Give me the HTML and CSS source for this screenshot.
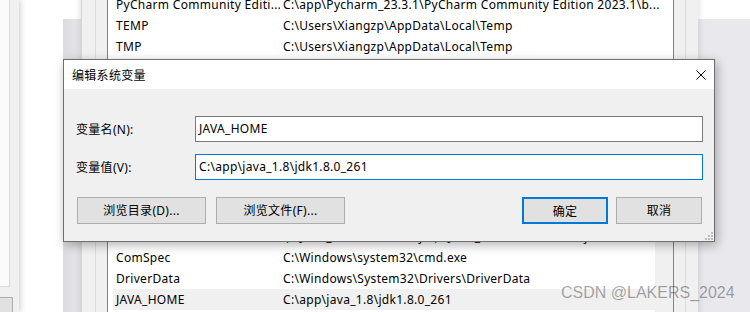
FILE: index.html
```html
<!DOCTYPE html>
<html lang="zh-CN">
<head>
    <meta charset="UTF-8">
    <title>编辑系统变量</title>
    <link rel="stylesheet" href="styles.css">
</head>
<body>
<div class="desk">

    <div class="sysprop">
        <div class="sysprop-panel"></div>
        <div class="sysprop-btn"></div>
    </div>

    <div class="shade"></div>

    <div class="envwin">
        <div class="group">
            <div class="list">
                <div class="row"><span>OneDrive</span><span>C:\Users\Xiangzp\OneDrive</span></div>
                <div class="row"><span>Path</span><span>C:\Users\Xiangzp\AppData\Local\Microsoft\WindowsApps;</span></div>
                <div class="row"><span>PyCharm Community Editi...</span><span>C:\app\Pycharm_23.3.1\PyCharm Community Edition 2023.1\b...</span></div>
                <div class="row"><span>TEMP</span><span>C:\Users\Xiangzp\AppData\Local\Temp</span></div>
                <div class="row"><span>TMP</span><span>C:\Users\Xiangzp\AppData\Local\Temp</span></div>
                <div class="row"><span></span><span></span></div>
                <div class="row"><span></span><span></span></div>
                <div class="row"><span></span><span></span></div>
            </div>
            <div class="list list-sys">
                <div class="rows">
                    <div class="head"><span>变量</span><span>值</span></div>
                    <div class="row"><span>CLASSPATH</span><span>.;%JAVA_HOME%\lib\dt.jar;%JAVA_HOME%\lib\tools.jar</span></div>
                    <div class="row"><span>ComSpec</span><span>C:\Windows\system32\cmd.exe</span></div>
                    <div class="row"><span>DriverData</span><span>C:\Windows\System32\Drivers\DriverData</span></div>
                    <div class="row sel"><span>JAVA_HOME</span><span>C:\app\java_1.8\jdk1.8.0_261</span></div>
                    <div class="row"><span>NUMBER_OF_PROCESSORS</span><span>8</span></div>
                </div>
                <div class="vscroll"></div>
            </div>
        </div>
    </div>

    <div class="dialog">
        <div class="titlebar">
            <span class="title">编辑系统变量</span>
            <svg class="close" width="10" height="10" viewBox="0 0 10 10">
                <path d="M0.5 0.5L9.5 9.5M9.5 0.5L0.5 9.5" stroke="#000" stroke-width="1" fill="none"/>
            </svg>
        </div>
        <div class="dlg-body">
            <div class="field">
                <label>变量名(N):</label>
                <div class="input">JAVA_HOME</div>
            </div>
            <div class="field">
                <label>变量值(V):</label>
                <div class="input focus">C:\app\java_1.8\jdk1.8.0_261</div>
            </div>
            <div class="buttons">
                <button class="btn wide">浏览目录(D)...</button>
                <button class="btn wide">浏览文件(F)...</button>
                <span class="spacer"></span>
                <button class="btn default">确定</button>
                <button class="btn">取消</button>
            </div>
            <svg class="grip" width="8" height="8" viewBox="0 0 8 8">
                <rect x="6" y="0" width="2" height="2" fill="#bdbdbd"/>
                <rect x="3" y="3" width="2" height="2" fill="#bdbdbd"/>
                <rect x="6" y="3" width="2" height="2" fill="#bdbdbd"/>
                <rect x="0" y="6" width="2" height="2" fill="#bdbdbd"/>
                <rect x="3" y="6" width="2" height="2" fill="#bdbdbd"/>
                <rect x="6" y="6" width="2" height="2" fill="#bdbdbd"/>
            </svg>
        </div>
    </div>

    <div class="mark">CSDN @LAKERS_2024</div>
</div>
</body>
</html>
```

FILE: styles.css
```css
body {
    margin: 0;
    background: #fff;
    color: #000;
    font: 12px "Noto Sans", "Noto Sans CJK SC", sans-serif;
    letter-spacing: 0.3px;
}
.desk {
    position: relative;
    width: 750px;
    height: 312px;
    overflow: hidden;
}

/* system properties window, far left */
.sysprop {
    position: absolute;
    left: 0;
    top: 0;
    width: 19px;
    height: 312px;
    background: #f0f0f0;
    box-shadow: 1px 0 6px rgba(0, 0, 0, 0.22);
}
.sysprop-panel {
    width: 10px;
    height: 287px;
    box-sizing: border-box;
    background: #fbfbfb;
    border-right: 1px solid #d9d9d9;
    border-bottom: 1px solid #d9d9d9;
}
.sysprop-btn {
    margin-top: 10px;
    width: 13px;
    height: 20px;
    box-sizing: border-box;
    background: #e1e1e1;
    border: 1px solid #adadad;
    border-left: 0;
}

.shade {
    position: absolute;
    left: 63px;
    top: 19px;
    right: 0;
    bottom: 0;
    background: linear-gradient(to right, #dcdce0, #e7e7eb 18px, #e9e9ed);
}

/* environment variables window */
.envwin {
    position: absolute;
    left: 81px;
    top: -60px;
    width: 617px;
    height: 400px;
    box-sizing: border-box;
    background: #f0f0f0;
    border-left: 1px solid #d5d5d5;
    padding: 0 12px 0 13px;
    box-shadow: 0 0 7px rgba(0, 0, 0, 0.16);
}
.group {
    border: 1px solid #dcdcdc;
    padding: 10px 11px 0;
    height: 380px;
}
.list {
    background: #fff;
    border: 1px solid #828282;
}
.list-sys {
    margin-top: 79px;
    display: flex;
}
.list-sys .rows {
    flex: 1;
}
.vscroll {
    width: 18px;
    background: #f0f0f0;
}
.head {
    height: 25px;
}
.row {
    display: grid;
    grid-template-columns: 167px 1fr;
    height: 21px;
    line-height: 21px;
    margin-left: 5px;
    white-space: nowrap;
}
.row span {
    padding-left: 3px;
    overflow: hidden;
}
.row.sel {
    background: #f0f0f0;
}

/* edit dialog */
.dialog {
    position: absolute;
    left: 63px;
    top: 59px;
    width: 652px;
    box-sizing: border-box;
    border: 1px solid #6f6f6f;
    background: #f0f0f0;
    box-shadow: 2px 3px 10px rgba(0, 0, 0, 0.3);
}
.titlebar {
    height: 29px;
    background: #fff;
    display: flex;
    align-items: center;
    justify-content: space-between;
    padding: 0 8px;
}
.close {
    display: block;
}
.dlg-body {
    position: relative;
    padding: 27px 11px 17px 12px;
}
.field {
    display: flex;
    align-items: center;
    height: 26px;
}
.field + .field {
    margin-top: 12px;
}
.field label {
    width: 119px;
}
.input {
    flex: 1;
    height: 26px;
    box-sizing: border-box;
    border: 1px solid #7a7a7a;
    background: #fff;
    padding-left: 3px;
    line-height: 24px;
    white-space: nowrap;
}
.input.focus {
    border-color: #0078d7;
}
.buttons {
    display: flex;
    margin-top: 17px;
    padding: 0 1px;
}
.spacer {
    flex: 1;
}
.btn {
    height: 27px;
    width: 86px;
    box-sizing: border-box;
    border: 1px solid #adadad;
    background: #e1e1e1;
    color: #000;
    font: inherit;
    letter-spacing: inherit;
    line-height: 25px;
    padding: 0;
    white-space: nowrap;
}
.btn.wide {
    width: 129px;
    margin-right: 10px;
}
.btn.default {
    border: 2px solid #0078d7;
    margin-right: 8px;
}
.grip {
    position: absolute;
    right: 1px;
    bottom: 1px;
}

.mark {
    position: absolute;
    left: 561px;
    top: 283px;
    font: 16px "Liberation Sans", sans-serif;
    letter-spacing: 0;
    line-height: 20px;
    color: rgba(0, 0, 0, 0.36);
    white-space: nowrap;
}
```
